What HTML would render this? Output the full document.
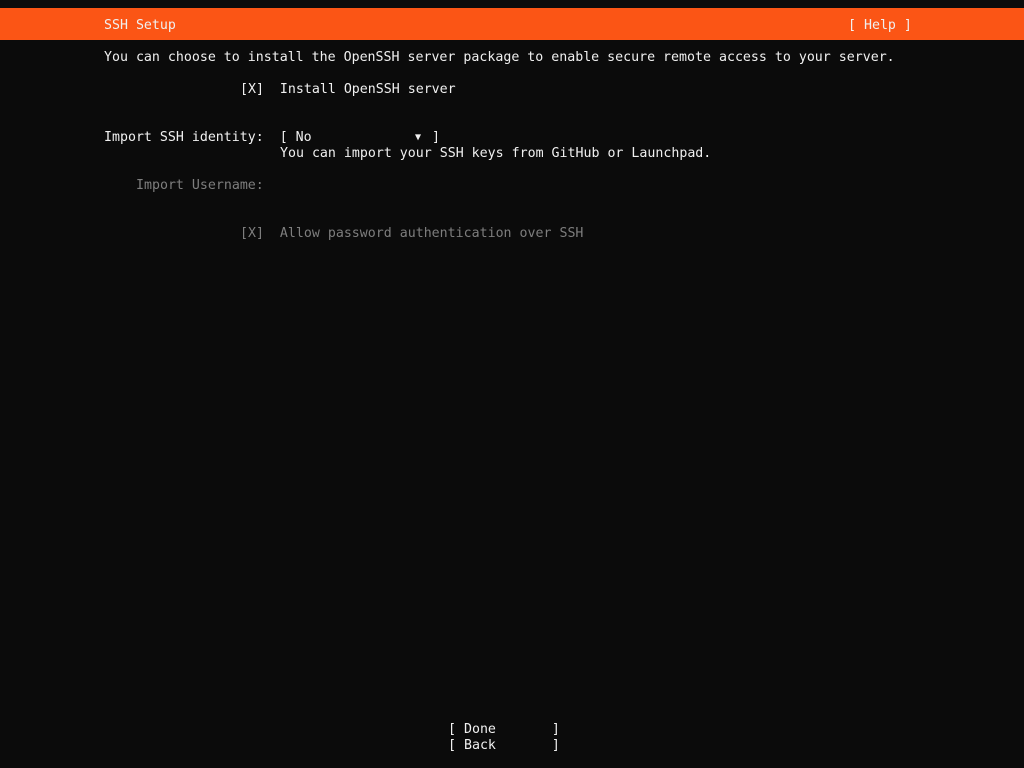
<!DOCTYPE html>
<html><head><meta charset="utf-8"><style>
html,body{margin:0;padding:0;background:#0b0b0b;width:1024px;height:768px;overflow:hidden}
.l{position:absolute;font-family:"DejaVu Sans Mono","Liberation Mono",monospace;font-size:13.28px;line-height:16px;height:16px;color:#f0f0f0;white-space:pre;margin-top:2px}
.g{color:#7e7e7e}
#bar{position:absolute;left:0;top:8px;width:1024px;height:32px;background:#fb5515}
</style></head><body>
<div id="bar"></div>
<div class="l" style="left:104px;top:16px">SSH Setup</div>
<div class="l" style="left:848px;top:16px">[ Help ]</div>
<div class="l" style="left:104px;top:48px">You can choose to install the OpenSSH server package to enable secure remote access to your server.</div>
<div class="l" style="left:240px;top:80px">[X]  Install OpenSSH server</div>
<div class="l" style="left:104px;top:128px">Import SSH identity:  [ No</div>
<div class="l" style="left:415px;top:128px;font-size:10px">▼</div>
<div class="l" style="left:432px;top:128px">]</div>
<div class="l" style="left:280px;top:144px">You can import your SSH keys from GitHub or Launchpad.</div>
<div class="l g" style="left:136px;top:176px">Import Username:</div>
<div class="l g" style="left:240px;top:224px">[X]  Allow password authentication over SSH</div>
<div class="l" style="left:448px;top:720px">[ Done       ]</div>
<div class="l" style="left:448px;top:736px">[ Back       ]</div>
</body></html>
